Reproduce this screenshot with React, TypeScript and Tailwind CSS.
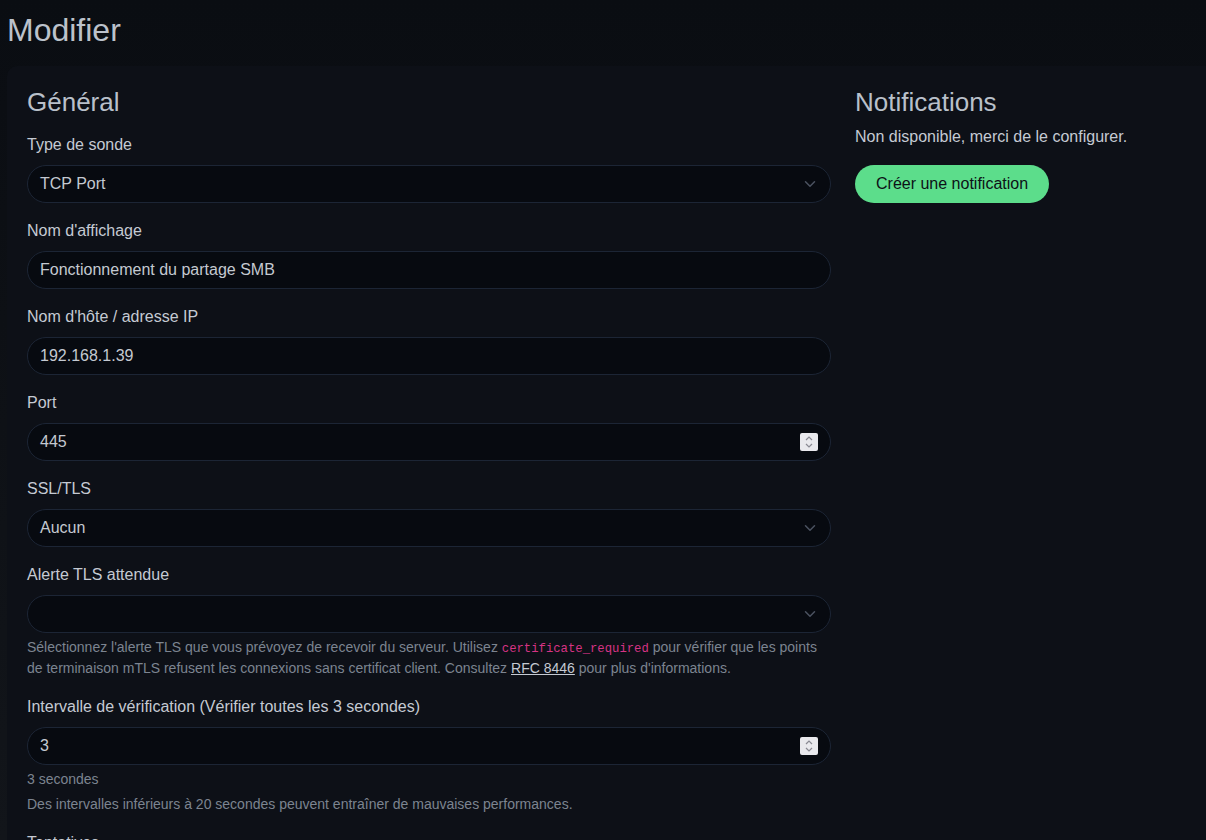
import React from "react";

const font = { fontFamily: '"Liberation Sans", Arial, sans-serif' };

function Chevron() {
  return (
    <svg width="12" height="12" viewBox="0 0 16 16" className="absolute right-[14px] top-1/2 -translate-y-1/2">
      <path d="M2 5l6 6 6-6" fill="none" stroke="#4b5260" strokeWidth="2" strokeLinecap="round" strokeLinejoin="round" />
    </svg>
  );
}

function Spinner() {
  return (
    <div className="absolute right-[12px] top-1/2 -translate-y-1/2 w-[18px] h-[18px] bg-[#e9e9ed] rounded-[2px] flex flex-col items-center justify-center gap-[2px]">
      <svg width="8" height="5" viewBox="0 0 8 5">
        <path d="M1 4l3-3 3 3" fill="none" stroke="#8a8a93" strokeWidth="1.2" />
      </svg>
      <svg width="8" height="5" viewBox="0 0 8 5">
        <path d="M1 1l3 3 3-3" fill="none" stroke="#8a8a93" strokeWidth="1.2" />
      </svg>
    </div>
  );
}

function Field({
  label,
  value,
  kind,
}: {
  label: string;
  value: string;
  kind?: "select" | "number" | "text";
}) {
  return (
    <div>
      <div className="text-[16px] leading-[24px] text-[#c5cad3] mb-[8px]">{label}</div>
      <div className="relative h-[38px] rounded-full border border-[#1c2535] bg-[#070a10] flex items-center pl-[12px] text-[16px] text-[#c4c9d1]">
        {value}
        {kind === "select" && <Chevron />}
        {kind === "number" && <Spinner />}
      </div>
    </div>
  );
}

export default function App() {
  return (
    <div
      className="h-[840px] w-[1206px] overflow-hidden bg-gradient-to-b from-[#0a0d12] to-[#12151a]"
      style={font}
    >
      <h1 className="pl-[7px] pt-[10px] h-[66px] text-[32px] leading-[40px] text-[#bcc2cb]">Modifier</h1>
      <div className="ml-[7px] bg-[#0d1017] rounded-tl-[10px] h-full pt-[20px] pl-[20px] flex gap-[24px]">
        <div className="w-[804px] shrink-0 flex flex-col">
          <h2 className="text-[26px] leading-[32px] text-[#b9c0ca] mb-[15px]">Général</h2>
          <div className="flex flex-col gap-[16px]">
            <Field label="Type de sonde" value="TCP Port" kind="select" />
            <Field label="Nom d'affichage" value="Fonctionnement du partage SMB" />
            <Field label="Nom d'hôte / adresse IP" value="192.168.1.39" />
            <Field label="Port" value="445" kind="number" />
            <Field label="SSL/TLS" value="Aucun" kind="select" />
            <div>
              <Field label="Alerte TLS attendue" value="" kind="select" />
              <p className="mt-[4px] text-[14px] leading-[21px] text-[#7c8490]">
                Sélectionnez l'alerte TLS que vous prévoyez de recevoir du serveur. Utilisez{" "}
                <code
                  className="text-[12.25px] leading-none text-[#d63384]"
                  style={{ fontFamily: '"Liberation Mono", "Courier New", monospace' }}
                >
                  certificate_required
                </code>{" "}
                pour vérifier que les points de terminaison mTLS refusent les connexions sans certificat client. Consultez{" "}
                <span className="underline text-[#c5cad3]">RFC 8446</span> pour plus d'informations.
              </p>
            </div>
            <div>
              <Field label="Intervalle de vérification (Vérifier toutes les 3 secondes)" value="3" kind="number" />
              <div className="mt-[4px] text-[14px] leading-[21px] text-[#7c8490]">3 secondes</div>
              <div className="mt-[4px] text-[14px] leading-[21px] text-[#7c8490]">
                Des intervalles inférieurs à 20 secondes peuvent entraîner de mauvaises performances.
              </div>
            </div>
            <div className="text-[16px] leading-[24px] text-[#c5cad3]">Tentatives</div>
          </div>
        </div>
        <div className="flex-1 flex flex-col items-start">
          <h2 className="text-[26px] leading-[32px] text-[#b9c0ca] mb-[7px]">Notifications</h2>
          <p className="text-[16px] leading-[24px] text-[#c5cad3] mb-[16px]">Non disponible, merci de le configurer.</p>
          <button className="h-[38px] px-[21px] rounded-full bg-[#5cdd8b] text-[16px] text-[#0d1117]">
            Créer une notification
          </button>
        </div>
      </div>
    </div>
  );
}
